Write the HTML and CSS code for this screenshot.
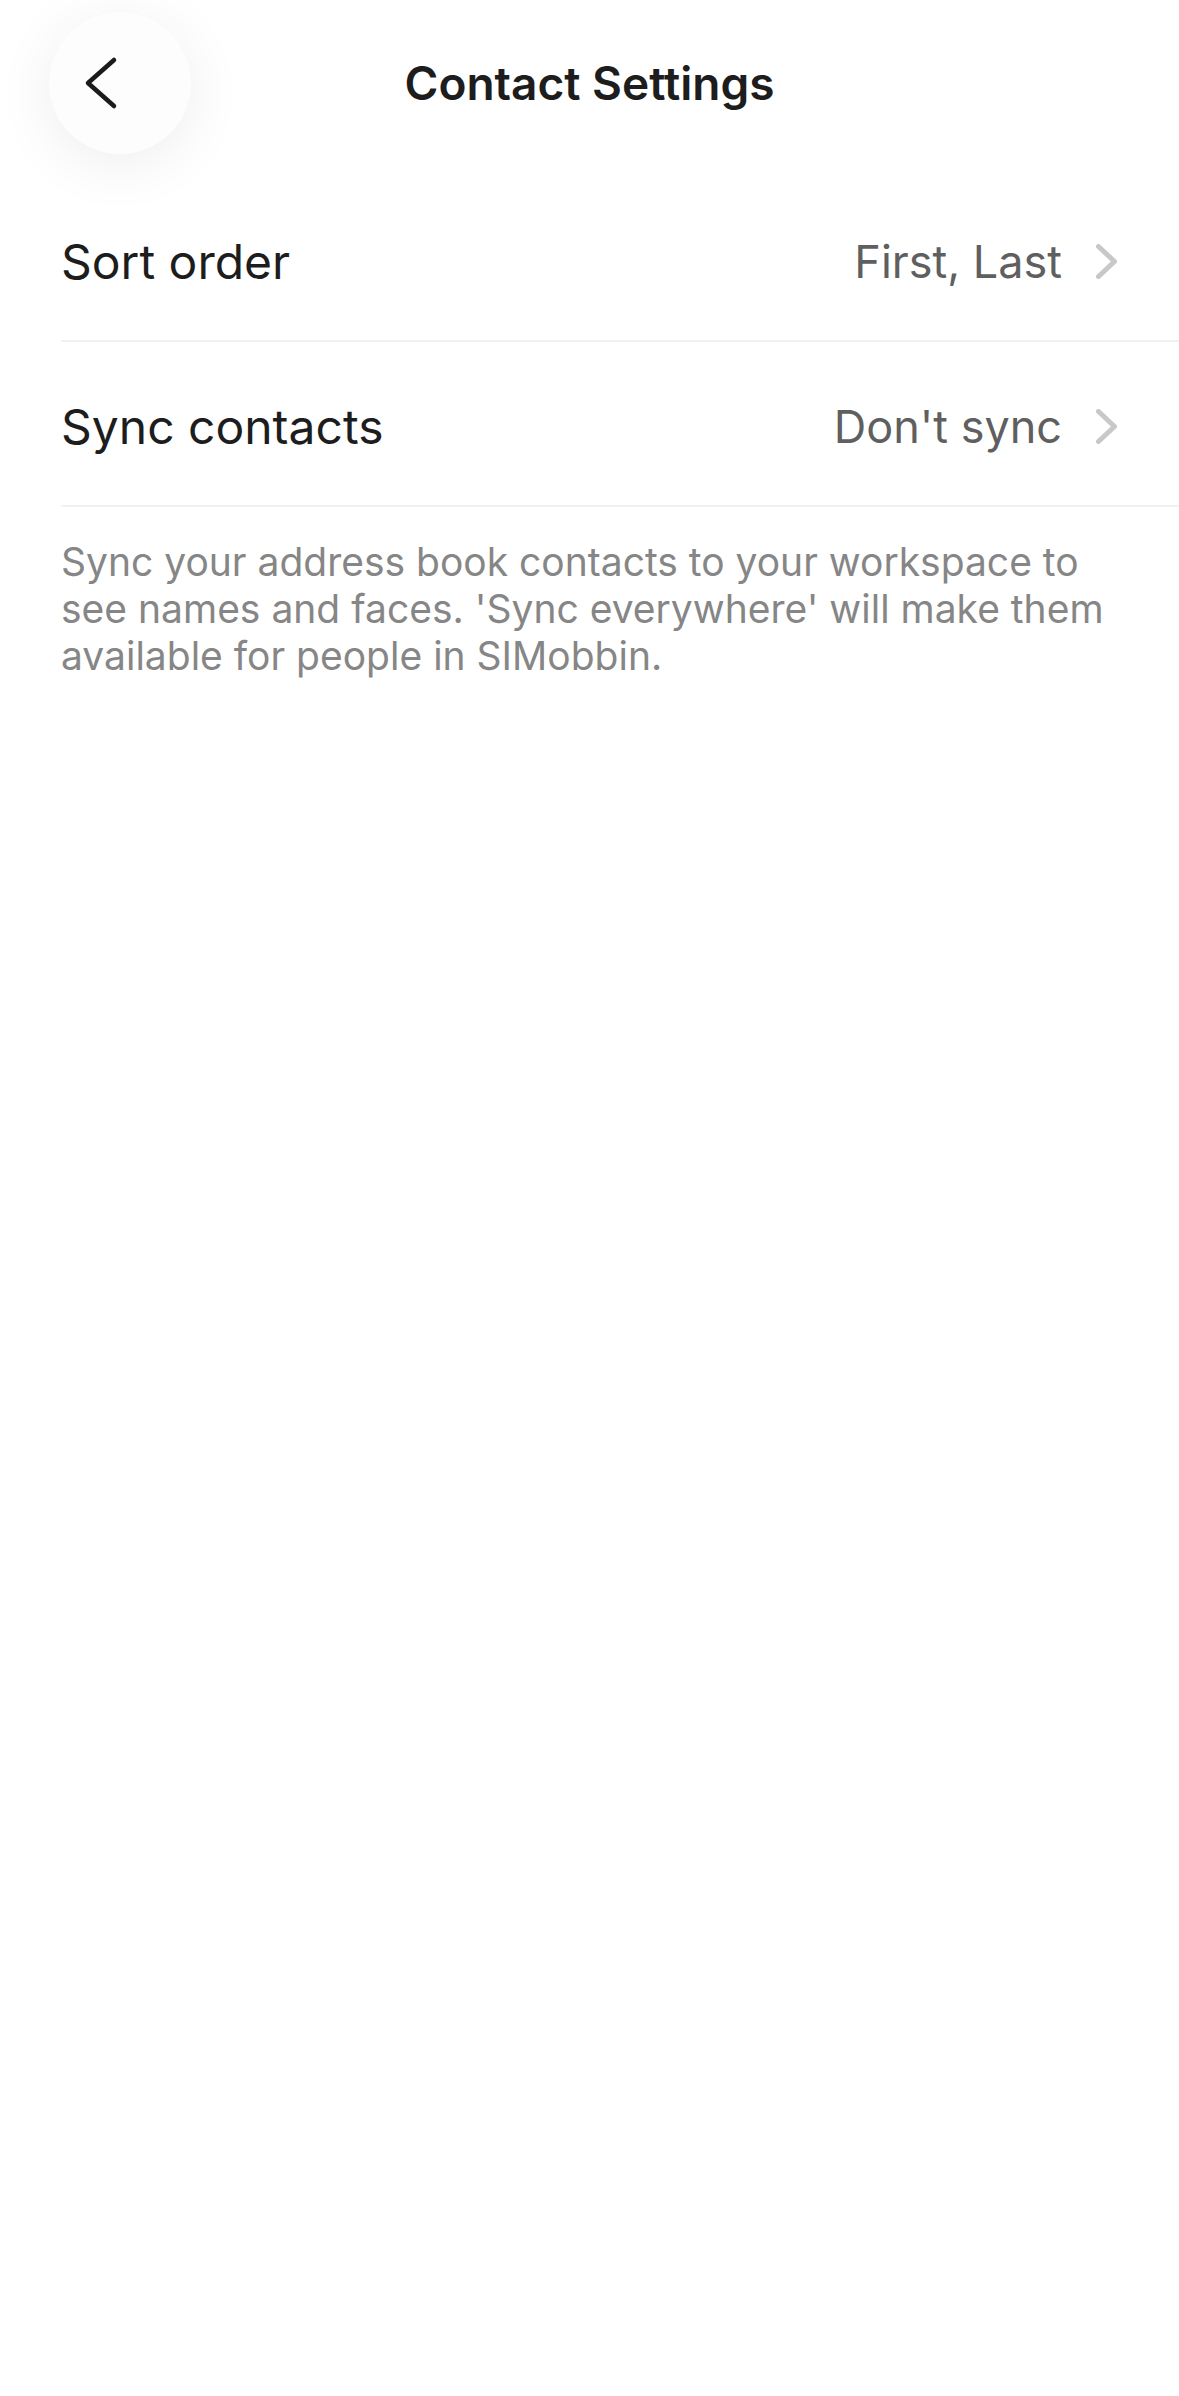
FILE: index.html
```html
<!DOCTYPE html>
<html>
<head>
<meta name="viewport" content="width=device-width, initial-scale=1">
<link rel="stylesheet" href="styles.css">
</head>
<body>

<header class="topbar">
  <div class="topbar-side">
    <button class="back-btn" aria-label="Back">
      <svg width="142" height="142" viewBox="0 0 142 142">
        <path d="M65 48 L39 71 L65 94" fill="none" stroke="#1b1b1b" stroke-width="4.5" stroke-linecap="round" stroke-linejoin="round"/>
      </svg>
    </button>
  </div>
  <h1 class="topbar-title">Contact Settings</h1>
  <div class="topbar-side"></div>
</header>

<ul class="settings-list">
  <li class="settings-row">
    <span class="row-label">Sort order</span>
    <span class="row-value">First, Last</span>
    <svg class="row-chevron" width="21" height="35" viewBox="0 0 21 35">
      <path d="M2.5 2.5 L18.5 17.5 L2.5 32.5" fill="none" stroke="#c8c8c8" stroke-width="5" stroke-linecap="round" stroke-linejoin="round"/>
    </svg>
  </li>
  <li class="settings-row">
    <span class="row-label">Sync contacts</span>
    <span class="row-value">Don't sync</span>
    <svg class="row-chevron" width="21" height="35" viewBox="0 0 21 35">
      <path d="M2.5 2.5 L18.5 17.5 L2.5 32.5" fill="none" stroke="#c8c8c8" stroke-width="5" stroke-linecap="round" stroke-linejoin="round"/>
    </svg>
  </li>
</ul>

<p class="settings-note">Sync your address book contacts to your workspace to see names and faces. 'Sync everywhere' will make them available for people in SIMobbin.</p>

</body>
</html>
```

FILE: styles.css
```css
* {
  box-sizing: border-box;
}

body {
  margin: 0;
  background-color: #ffffff;
  font-family: Inter, "Noto Sans", sans-serif;
  color: #1d1d1d;
}

/* top bar with round back button and centred title */
.topbar {
  display: grid;
  grid-template-columns: 1fr auto 1fr;
  align-items: center;
  height: 166px;
}

.topbar-side {
  display: flex;
  padding-left: 49px;
}

.back-btn {
  width: 142px;
  height: 142px;
  padding: 0;
  border: none;
  border-radius: 50%;
  background-color: #fdfdfd;
  box-shadow: 0 10px 60px rgba(0, 0, 0, 0.07);
  cursor: pointer;
}

.back-btn svg {
  display: block;
}

.topbar-title {
  margin: 0;
  font-size: 46px;
  font-weight: 600;
  color: #1d1d1d;
}

/* settings rows */
.settings-list {
  list-style: none;
  margin: 11px 0 0 0;
  padding: 0 0 0 61px;
}

.settings-row {
  display: flex;
  align-items: center;
  height: 165px;
  padding: 6px 62px 0 0;
  border-bottom: 2px solid #f1f1f1;
}

.row-label {
  flex: 1;
  font-size: 48px;
  color: #1d1d1d;
}

.row-value {
  font-size: 45px;
  color: #5f5f5f;
  margin-right: 34px;
}

.row-chevron {
  display: block;
}

.settings-note {
  margin: 31px 0 0 0;
  padding: 0 61px;
  font-size: 39px;
  line-height: 47px;
  color: #868686;
}
```
